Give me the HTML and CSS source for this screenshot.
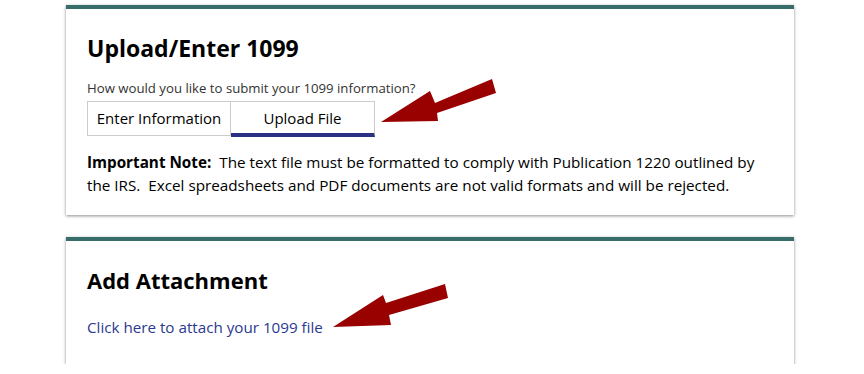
FILE: index.html
```html
<!DOCTYPE html>
<html lang="en">
<head>
    <meta charset="UTF-8">
    <meta name="viewport" content="width=device-width, initial-scale=1.0">
    <title>Upload/Enter 1099</title>
    <link rel="stylesheet" href="styles.css">
</head>
<body>

    <div class="page">

        <!-- Upload / Enter card -->
        <div class="card">
            <h2>Upload/Enter 1099</h2>
            <p class="question">How would you like to submit your 1099 information?</p>
            <div class="tabs">
                <div class="tab">Enter Information</div>
                <div class="tab active">Upload File</div>
            </div>
            <p class="note"><b>Important Note:</b> The text file must be formatted to comply with Publication 1220 outlined by the IRS.&nbsp; Excel spreadsheets and PDF documents are not valid formats and will be rejected.</p>
        </div>

        <!-- Attachment card -->
        <div class="card card-attach">
            <h2>Add Attachment</h2>
            <p class="attach"><a href="#">Click here to attach your 1099 file</a></p>
        </div>

    </div>

    <!-- Callout arrows -->
    <svg class="arrows" width="864" height="374" viewBox="0 0 864 374">
        <polygon points="381,122 438,121 437,113 496,93 492,79 435,103 430,91" fill="#990000"/>
        <polygon points="333,327 391,325 389,315 448,298 445,284 386,303 383,295" fill="#990000"/>
    </svg>

</body>
</html>
```

FILE: styles.css
```css
body {
    margin: 0;
    font-family: "Open Sans", "Noto Sans", sans-serif;
    color: #000;
    background: #fff;
}

.page {
    padding: 5px 0 0 66px;
}

.card {
    width: 686px;
    padding: 24px 21px 18px;
    border-top: 4px solid #386d6c;
    background: #fff;
    box-shadow: 0 1px 3px rgba(0, 0, 0, 0.45);
}

.card-attach {
    margin-top: 22px;
    padding-bottom: 25px;
}

h2 {
    margin: 0;
    font-size: 23px;
    line-height: 30px;
    font-weight: 700;
}

.card-attach h2 {
    font-size: 22px;
}

.question {
    margin: 16px 0 4px;
    font-size: 13.2px;
    line-height: 18px;
    color: #333;
}

.tabs {
    display: flex;
}

.tab {
    width: 144px;
    height: 35px;
    box-sizing: border-box;
    border: 1px solid #ccc;
    font-size: 15px;
    line-height: 33px;
    text-align: center;
}

.tab + .tab {
    border-left: none;
}

.tab.active {
    border-bottom: 4px solid #2b3283;
    height: 36px;
}

.note {
    margin: 14px 0 0;
    font-size: 15.25px;
    line-height: 23px;
}

.note b {
    margin-right: 4px;
}

.attach {
    margin: 21px 0 0;
    font-size: 15.2px;
    line-height: 23px;
}

.attach a {
    color: #2b3990;
    text-decoration: none;
}

.arrows {
    position: absolute;
    top: 0;
    left: 0;
    pointer-events: none;
}
```
